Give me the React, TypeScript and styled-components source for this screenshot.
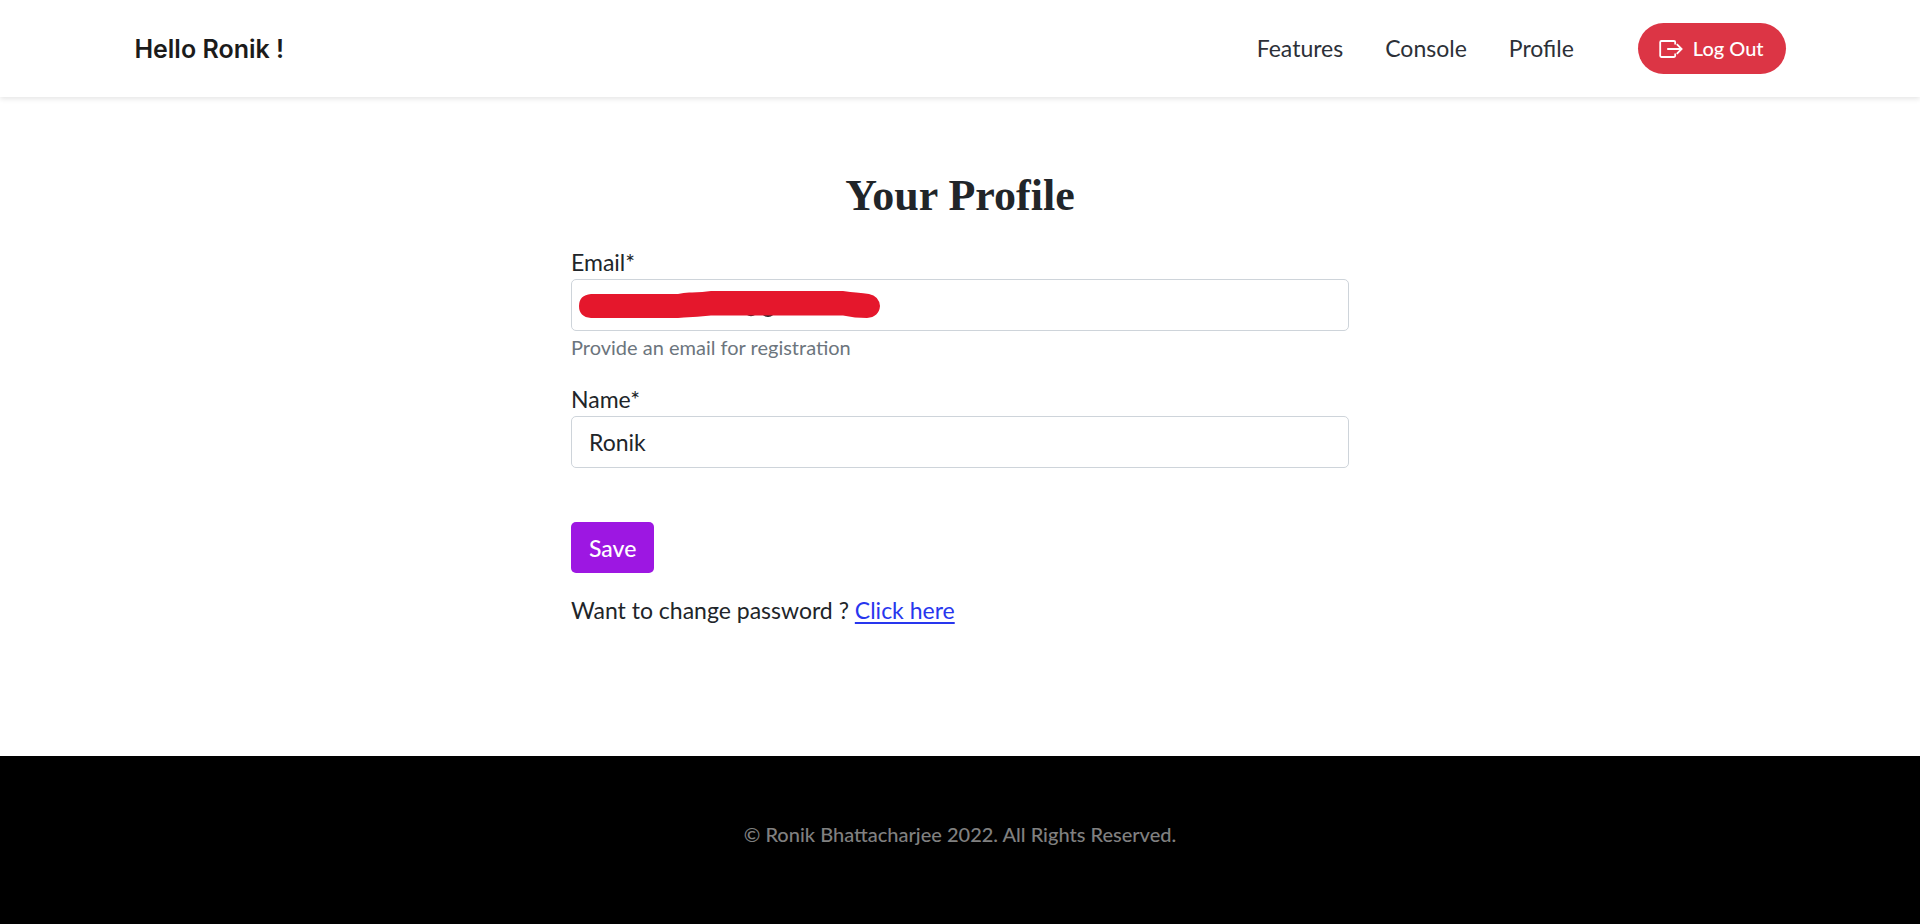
import React from "react";
import styled, { createGlobalStyle } from "styled-components";

const GlobalStyle = createGlobalStyle`
  *, *::before, *::after { box-sizing: border-box; }
  html, body, #root { min-height: 100vh; }
  body {
    margin: 0;
    background: #fff;
    color: #212529;
    font-family: Lato, "Open Sans", sans-serif;
    font-size: 23px;
    line-height: 30px;
  }
`;

const Page = styled.div`
  display: flex;
  flex-direction: column;
  min-height: 100vh;
`;

const Header = styled.header`
  display: flex;
  align-items: center;
  justify-content: space-between;
  height: 97px;
  padding: 0 7%;
  background: #fff;
  box-shadow: 0 2px 5px rgba(0, 0, 0, 0.1);
`;

const Brand = styled.a`
  color: #1b1b1b;
  font-family: Inter, sans-serif;
  font-size: 25px;
  font-weight: 600;
  text-decoration: none;
`;

const Nav = styled.nav`
  display: flex;
  align-items: center;
  gap: 42px;
`;

const NavLink = styled.a`
  padding-bottom: 2px;
  color: #2c3038;
  text-decoration: none;
`;

const LogOutButton = styled.button`
  display: flex;
  align-items: center;
  gap: 10px;
  height: 51px;
  margin-left: 22px;
  padding: 0 22px 0 21px;
  border: 0;
  border-radius: 26px;
  background: #dc3545;
  color: #fff;
  font: 500 20px/30px Lato, sans-serif;
  cursor: pointer;

  span {
    padding-bottom: 2px;
  }
`;

const Main = styled.main`
  flex: 1;
  width: 100%;
  max-width: 778px;
  margin: 0 auto;
  padding-top: 75px;
`;

const Title = styled.h1`
  margin: 0 0 27px;
  font: 700 44px/48px "Liberation Serif", serif;
  text-align: center;
`;

const Form = styled.form`
  display: flex;
  flex-direction: column;
  align-items: flex-start;
`;

const Field = styled.div`
  display: flex;
  flex-direction: column;
  width: 100%;
  margin-bottom: 22px;
`;

const Label = styled.label`
  margin-bottom: 2px;
`;

const Control = styled.div`
  position: relative;
`;

const Input = styled.input`
  display: block;
  width: 100%;
  height: 52px;
  padding: 0 17px;
  border: 1px solid #ced4da;
  border-radius: 5px;
  background: #fff;
  color: #212529;
  font: inherit;
`;

const Redaction = styled.svg`
  position: absolute;
  top: 12px;
  left: 8px;
  pointer-events: none;
`;

const Hint = styled.small`
  margin-top: 1px;
  color: #6c757d;
  font-size: 20px;
`;

const SaveButton = styled.button`
  height: 51px;
  margin-top: 32px;
  padding: 0 18px;
  border: 0;
  border-radius: 5px;
  background: #9d17e2;
  color: #fff;
  font: 500 23px/30px Lato, sans-serif;
  cursor: pointer;
`;

const PasswordNote = styled.p`
  margin: 22px 0 0;

  a {
    color: #2836ee;
    text-underline-offset: 3px;
    text-decoration-thickness: 2px;
  }
`;

const Footer = styled.footer`
  display: flex;
  justify-content: center;
  padding: 63px 24px 75px;
  background: #000;
  color: #808080;
  font-size: 20px;
  font-weight: 500;
`;

const LogOutIcon = () => (
  <svg width="24" height="18" viewBox="0 0 24 18" fill="none" stroke="currentColor" strokeWidth="1.8" aria-hidden="true">
    <path d="M16.2 4.6V2.2Q16.2 1 15 1H2.4Q1.200 1 1.200 2.200V15.800Q1.200 17 2.400 17H15Q16.200 17 16.200 15.800V13.400" />
    <path d="M8.200 9H22.800M17.800 4.200L22.600 9L17.800 13.800" />
  </svg>
);

export default function App() {
  return (
    <>
      <GlobalStyle />
      <Page>
        <Header>
          <Brand href="#">Hello Ronik !</Brand>
          <Nav>
            <NavLink href="#features">Features</NavLink>
            <NavLink href="#console">Console</NavLink>
            <NavLink href="#profile">Profile</NavLink>
            <LogOutButton type="button">
              <LogOutIcon />
              <span>Log Out</span>
            </LogOutButton>
          </Nav>
        </Header>
        <Main>
          <Title>Your Profile</Title>
          <Form onSubmit={(e) => e.preventDefault()}>
            <Field>
              <Label htmlFor="email">Email*</Label>
              <Control>
                <Input id="email" type="email" aria-describedby="email-hint" />
                <Redaction width="302" height="28" viewBox="0 0 302 28" aria-hidden="true">
                  <path d="M168 23Q172 25.500 176 23M184 23Q189 27 194 23" fill="none" stroke="#212529" strokeWidth="1.800" />
                  <path
                    d="M12 3H99Q106 1 113 1.500Q124 1 132 0H264Q272 1 277 1.500Q285 2 290 3Q300 5 301 15Q300 26 288 27Q276 27 264 24.500H132Q118 26 105 26.500L99 27H12Q0 26 0 15Q0 4 12 3Z"
                    fill="#e5172c"
                  />
                </Redaction>
              </Control>
              <Hint id="email-hint">Provide an email for registration</Hint>
            </Field>
            <Field>
              <Label htmlFor="name">Name*</Label>
              <Input id="name" type="text" defaultValue="Ronik" />
            </Field>
            <SaveButton type="submit">Save</SaveButton>
            <PasswordNote>
              Want to change password ? <a href="#password">Click here</a>
            </PasswordNote>
          </Form>
        </Main>
        <Footer>© Ronik Bhattacharjee 2022. All Rights Reserved.</Footer>
      </Page>
    </>
  );
}
